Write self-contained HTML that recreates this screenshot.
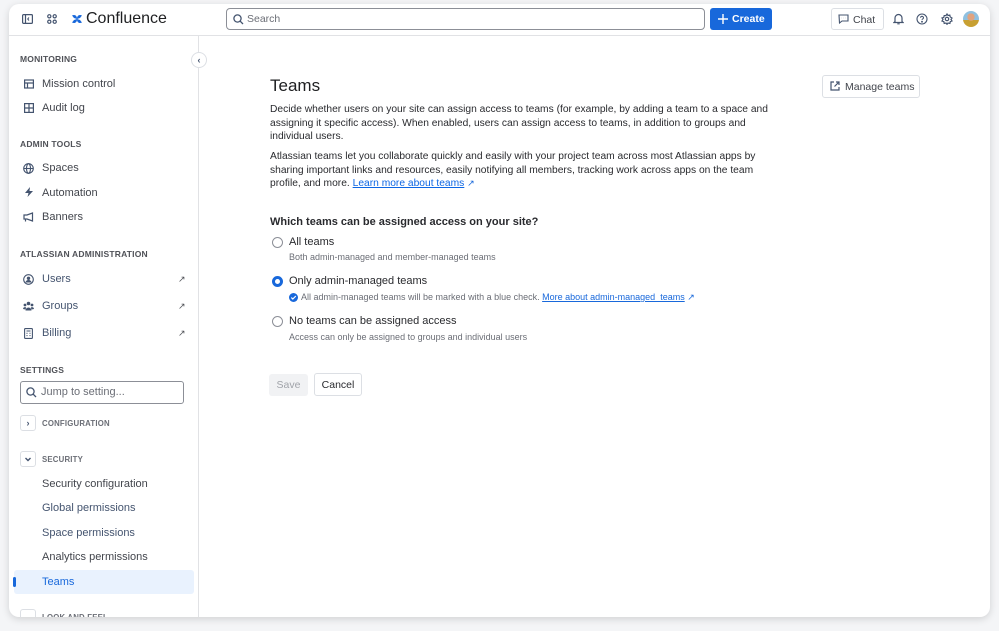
<!DOCTYPE html>
<html><head><meta charset="utf-8"><style>
*{box-sizing:border-box;margin:0;padding:0}
body{width:999px;height:631px;background:#f4f5f7;font-family:"Liberation Sans",sans-serif;color:#292a2e;position:relative;overflow:hidden}
.win{position:absolute;left:9px;top:4px;width:981px;height:613px;background:#fff;border-radius:10px;box-shadow:0 2px 8px rgba(0,0,0,.15);overflow:hidden}
.a{position:absolute;white-space:nowrap}
.hdr{position:absolute;left:0;top:0;width:981px;height:32px;border-bottom:1px solid #e1e2e5}
.side{position:absolute;left:0;top:32px;width:190px;height:581px;border-right:1px solid #e1e2e5}
.sec{font-size:8.5px;font-weight:bold;color:#505258;letter-spacing:.2px}
.it{font-size:11px;color:#42454c}
.it2{font-size:11px;color:#44546f}
.ic{position:absolute;width:10px;height:10px}
p{font-size:10.25px;line-height:13.6px;color:#292a2e}
a{color:#0c66e4;text-decoration:underline}
.rad{position:absolute;width:11px;height:11px;border-radius:50%;border:1.3px solid #8c8f97}
.arr{font-size:9px;color:#505258}
</style></head><body>
<div class="win">
 <div class="hdr">
  <svg class="a" style="left:13px;top:10px" width="11" height="10" viewBox="0 0 11 10"><rect x=".6" y=".6" width="9.8" height="8.8" rx="1" fill="none" stroke="#44546f" stroke-width="1.2"/><line x1="3.5" y1="1" x2="3.5" y2="9" stroke="#44546f" stroke-width="1.2"/><path d="M7 3.5L5.7 5 7 6.5" fill="none" stroke="#44546f"/></svg>
  <svg class="a" style="left:38px;top:10px" width="10" height="10" viewBox="0 0 10 10" fill="none" stroke="#44546f" stroke-width="1.2"><circle cx="2.3" cy="2.3" r="1.6"/><circle cx="7.7" cy="2.3" r="1.6"/><circle cx="2.3" cy="7.7" r="1.6"/><circle cx="7.7" cy="7.7" r="1.6"/></svg>
  <svg class="a" style="left:62px;top:9px" width="12" height="12" viewBox="0 0 12 12"><path d="M1 2.5C4 1 6 3 6 5.5 6 3 8 1 11 2.5L9 5 6 6 3 5Z M1 9.5C4 11 6 9 6 6.5 6 9 8 11 11 9.5L9 7 6 6 3 7Z" fill="#1868db"/></svg>
  <div class="a" style="left:77px;top:6px;font-size:16px;color:#1e1f21">Confluence</div>
  <div class="a" style="left:217px;top:4px;width:479px;height:22px;border:1px solid #8c8f97;border-radius:4px"></div>
  <svg class="a" style="left:224px;top:10px" width="11" height="11" viewBox="0 0 11 11" fill="none" stroke="#44546f" stroke-width="1.3"><circle cx="4.5" cy="4.5" r="3.6"/><line x1="7.2" y1="7.2" x2="10" y2="10"/></svg>
  <div class="a" style="left:238px;top:9px;font-size:10.5px;color:#6b6e76">Search</div>
  <div class="a" style="left:701px;top:4px;width:62px;height:22px;background:#1868db;border-radius:3px;color:#fff;font-size:10.5px;font-weight:bold;padding:5px 0 0 22px">Create</div>
  <svg class="a" style="left:709px;top:10px" width="10" height="10" viewBox="0 0 10 10"><path d="M5 0v10M0 5h10" stroke="#fff" stroke-width="1.4"/></svg>
  <div class="a" style="left:822px;top:4px;width:53px;height:22px;border:1px solid #dcdfe4;border-radius:3px;font-size:10.5px;color:#42454c;padding:5px 0 0 21px">Chat</div>
  <svg class="a" style="left:829px;top:10px" width="11" height="10" viewBox="0 0 11 10" fill="none" stroke="#44546f" stroke-width="1.1"><path d="M1 1H10V7H4L1.5 9Z"/><path d="M3.5 4h.1M5.5 4h.1M7.5 4h.1" stroke-width="1.4"/></svg>
  <svg class="a" style="left:884px;top:9px" width="11" height="12" viewBox="0 0 11 12" fill="none" stroke="#44546f" stroke-width="1.2"><path d="M2 8.5V5a3.5 3.5 0 017 0v3.5l1 1H1z"/><path d="M4.3 10.8h2.4"/></svg>
  <svg class="a" style="left:907px;top:9px" width="12" height="12" viewBox="0 0 12 12" fill="none" stroke="#44546f" stroke-width="1.1"><circle cx="6" cy="6" r="5"/><path d="M4.5 4.7a1.5 1.5 0 113 .2c0 1-1.5 1-1.5 2"/><circle cx="6" cy="8.7" r=".4" fill="#44546f"/></svg>
  <svg class="a" style="left:932px;top:9px" width="12" height="12" viewBox="0 0 12 12" fill="none" stroke="#44546f" stroke-width="1.2"><circle cx="6" cy="6" r="1.7"/><path d="M6 1l1 1.5 1.8-.4.4 1.8L11 5 10 6.5l1 1.5-1.7.6-.4 1.8L7 10 6 11.3 5 10l-1.8.4-.4-1.8L1 8 2 6.5 1 5l1.8-.6.4-1.8L5 2.5Z"/></svg>
  <div class="a" style="left:954px;top:7px;width:16px;height:16px;border-radius:50%;background:radial-gradient(circle at 50% 38%,#e0a37f 0 28%,transparent 30%),linear-gradient(#8fc0e0 55%,#c8a032 56%)"></div>
 </div>
 <div class="side">
  <div class="a" style="left:182px;top:16px;width:16px;height:16px;border-radius:50%;background:#fff;border:1px solid #dcdfe4;font-size:9px;color:#44546f;text-align:center;line-height:14px;font-weight:bold">‹</div>
  <div class="a sec" style="left:11px;top:18px">MONITORING</div>
  <svg class="ic" style="left:15px;top:43px" viewBox="0 0 10 10" fill="none" stroke="#44546f" stroke-width="1.2"><rect x=".6" y="1" width="8.8" height="8"/><path d="M.6 4H9.4M3.5 4V9"/></svg>
  <div class="a it" style="left:33px;top:42px">Mission control</div>
  <svg class="ic" style="left:15px;top:67px" viewBox="0 0 10 10" fill="none" stroke="#44546f" stroke-width="1.2"><rect x=".6" y=".6" width="8.8" height="8.8"/><path d="M5 .6V9.4M.6 5H9.4"/></svg>
  <div class="a it" style="left:33px;top:66px">Audit log</div>
  <div class="a sec" style="left:11px;top:103px">ADMIN TOOLS</div>
  <svg class="ic" style="left:14px;top:127px;width:11px;height:11px" viewBox="0 0 11 11" fill="none" stroke="#44546f" stroke-width="1.1"><circle cx="5.5" cy="5.5" r="4.8"/><ellipse cx="5.5" cy="5.5" rx="2" ry="4.8"/><path d="M.7 5.5h9.6"/></svg>
  <div class="a it" style="left:33px;top:126px">Spaces</div>
  <svg class="ic" style="left:15px;top:151px" viewBox="0 0 10 10"><path d="M6 0L1 6h3.5L3.5 10 9 4H5.5z" fill="#44546f"/></svg>
  <div class="a it" style="left:33px;top:151px">Automation</div>
  <svg class="ic" style="left:14px;top:176px;width:11px" viewBox="0 0 11 10" fill="none" stroke="#44546f" stroke-width="1.2"><path d="M1 3h3L9.5 1v8L4 7H1zM2.5 7v2.5"/></svg>
  <div class="a it" style="left:33px;top:175px">Banners</div>
  <div class="a sec" style="left:11px;top:213px">ATLASSIAN ADMINISTRATION</div>
  <svg class="ic" style="left:14px;top:238px;width:11px;height:11px" viewBox="0 0 11 11"><circle cx="5.5" cy="5.5" r="4.8" fill="none" stroke="#44546f" stroke-width="1.1"/><circle cx="5.5" cy="4.3" r="1.7" fill="#44546f"/><path d="M2.5 8.5a3 2.5 0 016 0z" fill="#44546f"/></svg>
  <div class="a it2" style="left:33px;top:237px">Users</div><div class="a arr" style="left:169px;top:238px">↗</div>
  <svg class="ic" style="left:14px;top:265px;width:11px" viewBox="0 0 11 10" fill="#44546f"><circle cx="5.5" cy="2.5" r="1.8"/><circle cx="2" cy="4" r="1.4"/><circle cx="9" cy="4" r="1.4"/><path d="M2.5 9.5a3 3 0 016 0zM0 8a2 2 0 013.2-1.5L2.5 8.5zM11 8a2 2 0 00-3.2-1.5l.7 2z"/></svg>
  <div class="a it2" style="left:33px;top:264px">Groups</div><div class="a arr" style="left:169px;top:265px">↗</div>
  <svg class="ic" style="left:15px;top:292px;width:9px;height:11px" viewBox="0 0 9 11" fill="none" stroke="#44546f" stroke-width="1.1"><rect x=".6" y=".6" width="7.8" height="9.8" rx=".8"/><path d="M2.5 3h4M2.5 5.3h1M5.5 5.3h1M2.5 7.6h1M5.5 7.6h1"/></svg>
  <div class="a it2" style="left:33px;top:291px">Billing</div><div class="a arr" style="left:169px;top:292px">↗</div>
  <div class="a sec" style="left:11px;top:329px">SETTINGS</div>
  <div class="a" style="left:11px;top:345px;width:164px;height:23px;border:1px solid #8c8f97;border-radius:3px"></div>
  <svg class="a" style="left:17px;top:351px" width="11" height="11" viewBox="0 0 11 11" fill="none" stroke="#44546f" stroke-width="1.3"><circle cx="4.5" cy="4.5" r="3.6"/><line x1="7.2" y1="7.2" x2="10" y2="10"/></svg>
  <div class="a" style="left:32px;top:350px;font-size:11px;color:#6b6e76">Jump to setting...</div>
  <div class="a" style="left:11px;top:379px;width:16px;height:16px;border:1px solid #dcdfe4;border-radius:3px;font-size:9px;text-align:center;line-height:14px;font-weight:bold;color:#44546f">›</div>
  <div class="a sec" style="left:33px;top:383px;font-size:7.8px;color:#6b6e76">CONFIGURATION</div>
  <div class="a" style="left:11px;top:415px;width:16px;height:16px;border:1px solid #dcdfe4;border-radius:3px"></div>
  <svg class="a" style="left:15px;top:419px" width="8" height="8" viewBox="0 0 8 8"><path d="M1.5 3L4 5.5 6.5 3" fill="none" stroke="#44546f" stroke-width="1.4"/></svg>
  <div class="a sec" style="left:33px;top:419px;font-size:7.8px;color:#6b6e76">SECURITY</div>
  <div class="a it" style="left:33px;top:442px">Security configuration</div>
  <div class="a it2" style="left:33px;top:466px">Global permissions</div>
  <div class="a it2" style="left:33px;top:491px">Space permissions</div>
  <div class="a it" style="left:33px;top:515px">Analytics permissions</div>
  <div class="a" style="left:5px;top:534px;width:180px;height:24px;background:#e9f2fe;border-radius:3px"></div>
  <div class="a" style="left:4px;top:541px;width:3px;height:10px;background:#1868db;border-radius:2px"></div>
  <div class="a" style="left:33px;top:540px;font-size:11px;color:#1868db">Teams</div>
  <div class="a sec" style="left:33px;top:577px;font-size:7.8px;color:#6b6e76">LOOK AND FEEL</div>
  <div class="a" style="left:11px;top:573px;width:16px;height:16px;border:1px solid #dcdfe4;border-radius:3px"></div>
 </div>
 <div class="a" style="left:261px;top:72px;font-size:17px;color:#1e1f21">Teams</div>
 <div class="a" style="left:813px;top:71px;width:98px;height:23px;border:1px solid #dcdfe4;border-radius:3px;font-size:10.5px;color:#42454c;padding:5px 0 0 22px">Manage teams</div>
 <svg class="a" style="left:821px;top:77px" width="10" height="10" viewBox="0 0 10 10" fill="none" stroke="#44546f" stroke-width="1.2"><path d="M4 1H1v8h8V6M6 1h3v3M9 1L4.5 5.5"/></svg>
 <p class="a" style="left:261px;top:99px;white-space:normal;width:500px">Decide whether users on your site can assign access to teams (for example, by adding a team to a space and assigning it specific access). When enabled, users can assign access to teams, in addition to groups and individual users.</p>
 <p class="a" style="left:261px;top:146px;white-space:normal;width:500px">Atlassian teams let you collaborate quickly and easily with your project team across most Atlassian apps by sharing important links and resources, easily notifying all members, tracking work across apps on the team profile, and more. <a>Learn more about teams</a> <span style="color:#1868db;font-size:9px">↗</span></p>
 <div class="a" style="left:261px;top:212px;font-size:11px;font-weight:bold;color:#292a2e">Which teams can be assigned access on your site?</div>
 <div class="rad" style="left:263px;top:233px"></div>
 <div class="a" style="left:280px;top:232px;font-size:11px">All teams</div>
 <div class="a" style="left:280px;top:248px;font-size:9px;color:#6b6e76">Both admin-managed and member-managed teams</div>
 <div class="rad" style="left:263px;top:272px;border:3.5px solid #1868db"></div>
 <div class="a" style="left:280px;top:271px;font-size:11px">Only admin-managed teams</div>
 <svg class="a" style="left:280px;top:289px" width="9" height="9" viewBox="0 0 9 9"><circle cx="4.5" cy="4.5" r="4.5" fill="#1868db"/><path d="M2.3 4.6l1.5 1.4 3-3" fill="none" stroke="#fff" stroke-width="1.2"/></svg>
 <div class="a" style="left:292px;top:288px;font-size:9px;color:#6b6e76">All admin-managed teams will be marked with a blue check. <a style="color:#1868db">More about admin-managed&nbsp; teams</a> <span style="color:#1868db">↗</span></div>
 <div class="rad" style="left:263px;top:312px"></div>
 <div class="a" style="left:280px;top:311px;font-size:11px">No teams can be assigned access</div>
 <div class="a" style="left:280px;top:328px;font-size:9px;color:#6b6e76">Access can only be assigned to groups and individual users</div>
 <div class="a" style="left:260px;top:370px;width:39px;height:22px;background:#f1f2f4;border-radius:3px;font-size:10.5px;color:#a0a3a9;text-align:center;line-height:22px">Save</div>
 <div class="a" style="left:305px;top:369px;width:48px;height:23px;border:1px solid #dcdfe4;border-radius:3px;font-size:10.5px;color:#292a2e;text-align:center;line-height:22px">Cancel</div>
</div>
</body></html>
